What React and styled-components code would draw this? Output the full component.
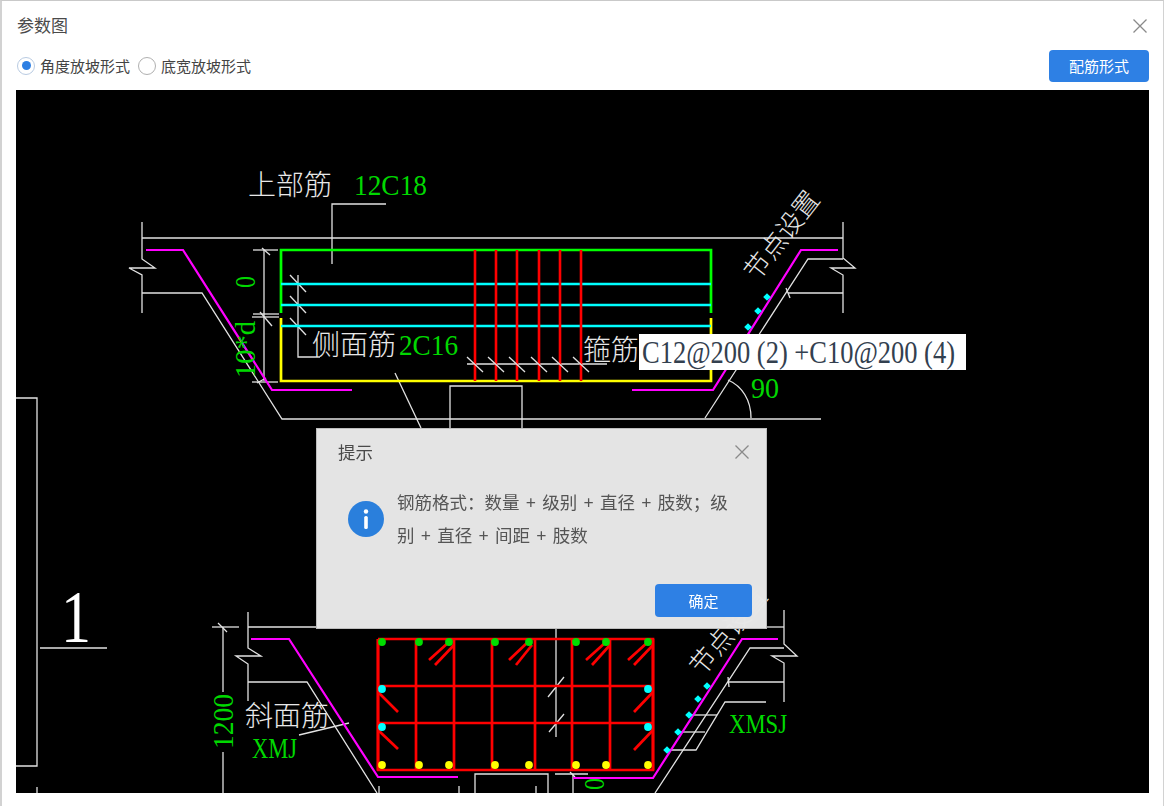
import React from "react";
import styled, { createGlobalStyle } from "styled-components";

const Global = createGlobalStyle`
  html, body { margin: 0; padding: 0; background: #fff; }
  body { font-family: "Noto Sans CJK SC", "Noto Sans", sans-serif; }
`;

const Win = styled.div`
  position: relative; width: 1164px; height: 806px; box-sizing: border-box;
  background: #fff; overflow: hidden;
  border-top: 1px solid #c9c9c9; border-left: 2px solid #d2d2d2; border-right: 1px solid #d2d2d2;
  display: flex; flex-direction: column;
`;
const TitleBar = styled.header`
  height: 49px; flex: none; box-sizing: border-box; padding: 0 15px 0 15px;
  display: flex; align-items: center; justify-content: space-between;
`;
const Title = styled.h1`
  margin: 0; font-size: 17px; font-weight: 400; color: #4a4a4a; line-height: 47px; height: 49px;
`;
const IconBtn = styled.button`
  all: unset; display: flex; width: 16px; height: 16px; color: ${p => p.$c || "#8a8a8a"};
`;
const Toolbar = styled.div`
  height: 40px; flex: none; box-sizing: border-box; padding: 0 14px 0 15px;
  display: flex; align-items: flex-start; justify-content: space-between;
`;
const Radios = styled.div`display: flex; align-items: center; gap: 8px; height: 31px;`;
const Radio = styled.label`
  display: flex; align-items: center; gap: 5px; font-size: 15px; color: #444; line-height: 20px;
`;
const Dot = styled.span`
  width: 18px; height: 18px; box-sizing: border-box; border-radius: 50%; background: #fff;
  border: 1.5px solid ${p => (p.$on ? "#b9cbe2" : "#b0b0b0")};
  display: flex; align-items: center; justify-content: center;
  &::after {
    content: ""; width: 9px; height: 9px; border-radius: 50%;
    background: ${p => (p.$on ? "#2d7fe3" : "transparent")};
  }
`;
const Primary = styled.button`
  all: unset; box-sizing: border-box; text-align: center; border-radius: 4px;
  background: #2e80e4; color: #fff; font-size: 15px;
  width: ${p => p.$w}px; height: ${p => p.$h}px; line-height: ${p => p.$h}px;
`;
const Canvas = styled.div`
  flex: none; width: 1133px; height: 703px; margin-left: 14px; background: #000; overflow: hidden;
`;
const Svg = styled.svg`display: block; width: 100%; height: 100%;`;
const Line = styled.polyline`
  fill: none; stroke: ${p => p.$c || "#e2e2e2"}; stroke-width: ${p => p.$w || 1.3};
  stroke-linejoin: miter;
`;
const Cad = styled.text`
  font-family: "Noto Sans CJK SC", "Liberation Serif", serif; font-weight: 300;
  font-size: ${p => p.$s || 28}px; fill: #e8e8e8;
`;
const Num = styled.text`
  font-family: "Liberation Serif", serif; font-size: ${p => p.$s || 29}px;
  fill: ${p => p.$c || "#00d800"};
`;

const Modal = styled.section`
  position: absolute; left: 314px; top: 427px; width: 451px; height: 201px; box-sizing: border-box;
  border: 1px solid #bdbdbd; background: rgba(238, 238, 238, 0.955); backdrop-filter: blur(10px);
  display: flex; flex-direction: column;
`;
const ModalHead = styled.div`
  display: flex; justify-content: space-between; align-items: center; height: 45px; flex: none;
  padding: 0 16px 0 21px;
`;
const ModalTitle = styled.h2`margin: 0; font-size: 17.5px; font-weight: 400; color: #4a4a4a;`;
const ModalBody = styled.div`
  display: flex; flex: 1; padding: 12px 30px 0 31px; gap: 13px; align-items: flex-start;
`;
const Info = styled.svg`width: 36px; height: 36px; flex: none; margin-top: 15px;`;
const Msg = styled.p`
  margin: 0; width: 332px; font-size: 17.5px; line-height: 32.5px; color: #555; word-spacing: 2.6px;
`;
const ModalFoot = styled.div`display: flex; justify-content: flex-end; padding: 0 14px 11px 0;`;

const X = ({ s = 16 }) => (
  <svg width={s} height={s} viewBox="0 0 16 16" fill="none" stroke="currentColor" strokeWidth="1.3">
    <path d="M1.5 1.5 14.5 14.5M14.5 1.5 1.5 14.5" />
  </svg>
);

const white = [
  "142,222 142,259 155,268 129,268 142,275 142,313", "142,238 843,238", "142,293 202,293 282,419 821,419",
  "332,264 332,204 386,204", "264,250 264,381", "253,250 278,250", "253,314 279,314", "252,317 279,317", "252,382 278,382",
  "262,248 270,255", "260,312 272,326", "257,383 266,378",
  "298,275 298,357 320,357", "290,275 306,292", "290,296 306,313", "290,318 306,335",
  "395,373 421,428", "467,364 607,364",
  "450,428 450,386 522,386 522,428",
  "843,222 843,258 855,268 831,268 843,275 843,313", "843,259 808,259 705,418", "843,293 788,293", "786,288 790,298",
  "16,398 37,398 37,766 16,766", "37,787 37,793", "40,648 107,648",
  "223,627 223,692", "223,752 223,793", "212,627 239,627", "218,623 227,632",
  "248,612 248,648 261,656 236,656 248,664 248,701", "248,627 316,627", "248,682 307,682 377,793", "299,735 349,723",
  "475,793 475,774 548,774 548,793", "555,774 588,774", "573,774 573,793", "570,772 575,777",
  "556,629 556,737", "548,697 564,677", "549,732 564,714",
  "784,610 784,644 797,656 772,656 784,663 784,702", "767,627 784,627", "784,648 750,648 655,793", "784,682 728,682", "728,677 729,687",
  "766,702 725,702 696,750 667,750", "705,732 678,732", "717,715 690,715", "536,793 536,786", "459,793 459,786", "379,793 379,786"
];
const stirrupX = [475, 496, 517, 539, 560, 581];
const cyanY = [284, 305, 326];
const vBars = [378, 416, 454, 492, 535, 572, 610, 653];
const dotX = [382, 419, 449, 495, 529, 576, 606, 648];
const hooks = [
  "449,642 429,660", "454,645 435,665", "528,642 509,660", "532,645 516,665", "606,642 586,660", "610,645 592,665", "648,642 628,660", "653,645 634,665",
  "378,692 398,712", "378,730 398,749", "653,692 634,712", "653,730 634,750"
];
const cyanDots = [[767, 297], [758, 311], [748, 327], [707, 686], [698, 699], [689, 715], [678, 732], [667, 750]];
const Diamond = ({ x, y, c, r = 3.8 }) => <polygon points={`${x - r},${y} ${x},${y - r} ${x + r},${y} ${x},${y + r}`} fill={c} />;
const Bead = ({ x, y, c }) => <circle cx={x} cy={y} r={3.9} fill={c} />;

const Drawing = () => (
  <Svg viewBox="16 90 1133 703">
    {white.map((p, i) => <Line key={i} points={p} />)}
    <path d="M728 380 C742 386 751 400 751 418" fill="none" stroke="#e2e2e2" strokeWidth="1.3" />

    {/* upper section */}
    <Line $c="#f0f" $w={2.2} points="146,250 183,250 272,390 352,390" />
    <Line $c="#f0f" $w={2.2} points="838,250 801,250 713,390 632,390" />
    <Line $c="#0f0" $w={2.7} points="281,313 281,250 711,250 711,313" />
    <Line $c="#ff0" $w={2.7} points="281,318 281,381 711,381 711,318" />
    {cyanY.map(y => <Line key={y} $c="#0ff" $w={2.7} points={`281,${y} 711,${y}`} />)}
    {stirrupX.map(x => <Line key={x} $c="#f00" $w={2.6} points={`${x},250 ${x},381`} />)}
    {stirrupX.map(x => <Line key={x} points={`${x - 8},357 ${x + 8},372`} />)}

    {/* lower section */}
    <Line $c="#f0f" $w={2.2} points="251,639 289,639 378,777 458,777" />
    <Line $c="#f0f" $w={2.2} points="573,778 653,778 742,639 778,639" />
    <Line $c="#f00" $w={2.7} points="378,639 653,639 653,770 378,770 378,639" />
    <Line $c="#f00" $w={2.7} points="378,686 653,686" />
    <Line $c="#f00" $w={2.7} points="378,723 653,723" />
    {vBars.map(x => <Line key={x} $c="#f00" $w={2.7} points={`${x},639 ${x},770`} />)}
    {hooks.map(p => <Line key={p} $c="#f00" $w={2.7} points={p} />)}
    {dotX.map(x => <Bead key={x} x={x} y={642} c="#0d0" />)}
    {dotX.map(x => <Bead key={x} x={x} y={765} c="#ff0" />)}
    {[382, 648].flatMap(x => [689, 727].map(y => <Bead key={x + "-" + y} x={x} y={y} c="#0ff" />))}
    {cyanDots.map(([x, y]) => <Diamond key={x} x={x} y={y} c="#0ff" />)}

    <Cad x="248" y="195">上部筋</Cad>
    <Num x="354" y="195" textLength="73" lengthAdjust="spacingAndGlyphs">12C18</Num>
    <Num transform="translate(255,288) rotate(-90)" $s={30} textLength="12" lengthAdjust="spacingAndGlyphs">0</Num>
    <Num transform="translate(255,378) rotate(-90)" $s={30} textLength="57" lengthAdjust="spacingAndGlyphs">10*d</Num>
    <Cad x="312" y="355">侧面筋</Cad>
    <Num x="399" y="355" textLength="59" lengthAdjust="spacingAndGlyphs">2C16</Num>
    <Cad x="583" y="360">箍筋</Cad>
    <rect x="639" y="334" width="327" height="36" fill="#fff" />
    <Num x="642" y="362.5" $c="#33404f" $s={31} textLength="313" lengthAdjust="spacingAndGlyphs">C12@200 (2) +C10@200 (4)</Num>
    <Num x="751" y="398" textLength="28" lengthAdjust="spacingAndGlyphs">90</Num>
    <Cad $s={26} transform="translate(757,282) rotate(-52)">节点设置</Cad>
    <Num x="0" y="0" $s={74} $c="#fff" textLength="30" lengthAdjust="spacingAndGlyphs" transform="translate(61,642)">1</Num>
    <Num transform="translate(233,749) rotate(-90)" $s={30} textLength="55" lengthAdjust="spacingAndGlyphs">1200</Num>
    <Cad x="245" y="726">斜面筋</Cad>
    <Num x="252" y="758" $s={29} textLength="45" lengthAdjust="spacingAndGlyphs">XMJ</Num>
    <Num x="729" y="733" $s={28} textLength="58" lengthAdjust="spacingAndGlyphs">XMSJ</Num>
    <Num transform="translate(604,790) rotate(-90)" $s={30} textLength="12" lengthAdjust="spacingAndGlyphs">0</Num>
    <Cad $s={26} transform="translate(702,677) rotate(-50)">节点设置</Cad>
  </Svg>
);

export default function App() {
  return (
    <>
      <Global />
      <Win>
        <TitleBar>
          <Title>参数图</Title>
          <IconBtn aria-label="关闭"><X /></IconBtn>
        </TitleBar>
        <Toolbar>
          <Radios>
            <Radio><Dot $on />角度放坡形式</Radio>
            <Radio><Dot />底宽放坡形式</Radio>
          </Radios>
          <Primary $w={100} $h={32}>配筋形式</Primary>
        </Toolbar>
        <Canvas><Drawing /></Canvas>
        <Modal>
          <ModalHead>
            <ModalTitle>提示</ModalTitle>
            <IconBtn aria-label="关闭"><X /></IconBtn>
          </ModalHead>
          <ModalBody>
            <Info viewBox="0 0 36 36">
              <circle cx="18" cy="18" r="18" fill="#2a7fdc" />
              <circle cx="18" cy="10.5" r="2.2" fill="#fff" />
              <rect x="16.2" y="15" width="3.6" height="13" rx="1.6" fill="#fff" />
            </Info>
            <Msg>钢筋格式：数量 + 级别 + 直径 + 肢数；级别 + 直径 + 间距 + 肢数</Msg>
          </ModalBody>
          <ModalFoot><Primary $w={97} $h={33}>确定</Primary></ModalFoot>
        </Modal>
      </Win>
    </>
  );
}
